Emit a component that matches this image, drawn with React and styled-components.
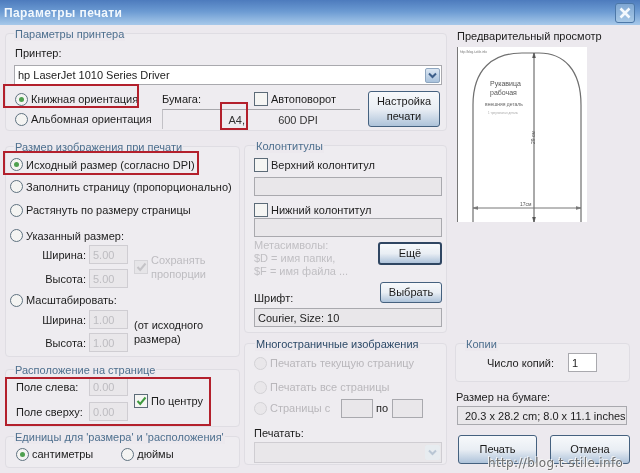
import React from "react";
import styled, { createGlobalStyle } from "styled-components";

const GlobalStyle = createGlobalStyle`
  html, body {
    margin: 0;
    padding: 0;
    background: #ece9ee;
  }
  * {
    box-sizing: border-box;
  }
`;

const Dialog = styled.div`
  position: relative;
  width: 640px;
  height: 473px;
  overflow: hidden;
  background: #ece9ee;
  color: #1c1c1c;
  font-family: "Liberation Sans", Arial, sans-serif;
  font-size: 11px;
  line-height: 14px;
  filter: blur(0.35px);
`;

const TitleBar = styled.header`
  height: 25px;
  display: flex;
  align-items: center;
  justify-content: space-between;
  padding: 0 5px 0 4px;
  background: linear-gradient(#4d7bbd, #6b9ad2 45%, #a7c9ea);
`;

const Title = styled.h1`
  margin: 0;
  color: #f2f8fd;
  font-size: 12px;
  font-weight: 700;
  letter-spacing: 0.4px;
`;

const CloseButton = styled.div`
  width: 20px;
  height: 20px;
  border: 1px solid #4d78a8;
  border-radius: 3px;
  background: linear-gradient(#7fa7d3, #a7c8e6);
  display: flex;
  align-items: center;
  justify-content: center;
`;

const Body = styled.div`
  display: flex;
  padding: 8px 8px 0 5px;
  gap: 8px;
`;

const MainColumn = styled.div`
  width: 442px;
`;

const SideColumn = styled.div`
  width: 177px;
  display: flex;
  flex-direction: column;
`;

const Columns = styled.div`
  display: flex;
  gap: 4px;
  margin-top: 15px;
`;

const Stack = styled.div`
  display: flex;
  flex-direction: column;
  width: ${(p) => p.$w}px;
`;

const Group = styled.section`
  height: ${(p) => p.$h}px;
  width: ${(p) => (p.$w ? `${p.$w}px` : "auto")};
  margin-top: ${(p) => p.$mt || 0}px;
  padding: 0 ${(p) => p.$pr || 4}px 0 ${(p) => p.$pl || 5}px;
  border: 1px solid #dfdde3;
  border-radius: 4px;
  background: #eeecf0;
`;

const Legend = styled.div`
  height: 14px;
  margin: -7px 0 0 ${(p) => p.$ml || 0}px;
  width: fit-content;
  padding: 0 1px;
  color: ${(p) => (p.$dark ? "#2d4a68" : "#4d6f8e")};
  background: #ece9ee;
  white-space: nowrap;
`;

const Row = styled.div`
  display: flex;
  align-items: center;
  height: ${(p) => p.$h}px;
  margin-top: ${(p) => p.$mt || 0}px;
  margin-left: ${(p) => p.$ml || 0}px;
  color: ${(p) => (p.$off ? "#b9b7bb" : "inherit")};
  white-space: nowrap;
`;

const Circle = styled.span`
  flex: none;
  width: 13px;
  height: 13px;
  margin-right: 3px;
  border-radius: 50%;
  border: 1px solid ${(p) => (p.$off ? "#d3d2d6" : "#5f7280")};
  background: ${(p) => (p.$off ? "#e9e7ea" : "#f4f4f2")};
  display: flex;
  align-items: center;
  justify-content: center;
  &::after {
    content: "";
    display: ${(p) => (p.$on ? "block" : "none")};
    width: 5px;
    height: 5px;
    border-radius: 50%;
    background: #4fa04f;
  }
`;

const Box = styled.span`
  flex: none;
  width: 14px;
  height: 14px;
  margin-right: 3px;
  border: 1px solid ${(p) => (p.$off ? "#d5d4d8" : "#5c6b78")};
  background: ${(p) => (p.$off ? "#e6e5e8" : "#f5f5f3")};
  display: flex;
  align-items: center;
  justify-content: center;
`;

const Field = styled.div`
  flex: none;
  width: ${(p) => (p.$w ? `${p.$w}px` : "auto")};
  height: ${(p) => p.$h || 19}px;
  margin-top: ${(p) => p.$mt || 0}px;
  margin-left: ${(p) => p.$ml || 0}px;
  padding: 0 ${(p) => p.$pad || 3}px;
  display: flex;
  align-items: center;
  border: 1px solid ${(p) => (p.$soft ? "#cfcdd2" : "#a9a9ae")};
  background: ${(p) => (p.$white ? "#fff" : "#e9e7ea")};
  color: ${(p) => (p.$faded ? "#bdbcc0" : "inherit")};
  white-space: nowrap;
`;

const DropArrow = styled.span`
  margin-left: auto;
  margin-right: -2px;
  width: 15px;
  height: 15px;
  border-radius: 2px;
  display: flex;
  align-items: center;
  justify-content: center;
  background: ${(p) => (p.$off ? "#e7ecf0" : "linear-gradient(#dce7f3, #a9c2dc)")};
  border: 1px solid ${(p) => (p.$off ? "#e7ecf0" : "#8ea6c0")};
`;

const RadioColumn = styled.div`
  flex: none;
  width: 148px;
`;

const PaperPanel = styled.div`
  flex: none;
  width: 198px;
`;

const PaperLabel = styled.span`
  width: 92px;
`;

const PaperField = styled.div`
  height: 20px;
  width: 198px;
  display: grid;
  grid-template-columns: 85px 1fr;
  align-items: center;
  border-top: 1px solid #a8a8ac;
  border-left: 1px solid #c2c1c6;
`;

const PaperRight = styled.span`
  text-align: right;
  padding-right: 3px;
  color: #333;
`;

const PaperDpi = styled.span`
  text-align: center;
  padding-right: 12px;
  color: #333;
`;

const PushButton = styled.div`
  flex: none;
  width: ${(p) => p.$w}px;
  height: ${(p) => p.$h}px;
  margin-left: ${(p) => p.$ml || 0}px;
  margin-top: ${(p) => p.$mt || 0}px;
  border: ${(p) => (p.$focus ? "2px solid #2f4662" : "1px solid #45617f")};
  border-radius: 3px;
  background: linear-gradient(#f7f9fb, #e9eef4 50%, #aec3da);
  color: #1a1a1a;
  display: flex;
  align-items: center;
  justify-content: center;
  text-align: center;
  line-height: 15px;
`;

const SizeBlock = styled.div`
  display: flex;
`;

const SizeRows = styled.div`
  width: 124px;
`;

const SizeLabel = styled.span`
  width: 79px;
  text-align: right;
  padding-right: 3px;
`;

const SizeNote = styled.div`
  display: flex;
  align-items: center;
  color: ${(p) => (p.$off ? "#bdbcc0" : "inherit")};
  line-height: 14px;
`;

const MarginLabel = styled.span`
  width: 79px;
  padding-left: 6px;
`;

const MetaBlock = styled.div`
  display: flex;
  justify-content: space-between;
  margin-top: ${(p) => p.$mt || 0}px;
  height: ${(p) => p.$h}px;
`;

const MetaText = styled.div`
  color: #c0bfc3;
  line-height: 13px;
  padding-top: 1px;
`;

const PagesLabel = styled(Row)`
  width: 87px;
`;

const PreviewTitle = styled.div`
  height: 14px;
  margin-top: -4px;
  padding-left: 2px;
  white-space: nowrap;
`;

const PreviewFrame = styled.svg`
  display: block;
  width: 130px;
  height: 175px;
  margin-top: 4px;
  margin-left: 2px;
  background: #fff;
`;

const ActionRow = styled.div`
  display: flex;
  justify-content: space-between;
  width: 172px;
  margin: 10px 0 0 3px;
`;

const Watermark = styled.div`
  position: absolute;
  left: 488px;
  top: 456px;
  font-family: "DejaVu Sans", sans-serif;
  font-size: 12px;
  line-height: 15px;
  letter-spacing: 0.35px;
  color: #6f6f6f;
  text-shadow: 1px 1px 0 #f4f4f4, -1px -1px 0 #f4f4f4;
`;

const Highlight = styled.div`
  position: absolute;
  left: ${(p) => p.$x}px;
  top: ${(p) => p.$y}px;
  width: ${(p) => p.$w}px;
  height: ${(p) => p.$h}px;
  border: 2px solid #b3202c;
  pointer-events: none;
`;

const Chevron = ({ color = "#3d5f8a" }) => (
  <svg width="9" height="7" viewBox="0 0 9 7">
    <path d="M1 1.5 L4.5 5 L8 1.5" fill="none" stroke={color} strokeWidth="2" />
  </svg>
);

const Tick = ({ color = "#3f9a3f" }) => (
  <svg width="11" height="10" viewBox="0 0 11 10">
    <path d="M1.5 5 L4.2 8 L9.5 1.5" fill="none" stroke={color} strokeWidth="2" />
  </svg>
);

const Radio = ({ on, off, h, mt, ml, children }) => (
  <Row $h={h} $mt={mt} $ml={ml} $off={off}>
    <Circle $on={on} $off={off} />
    {children}
  </Row>
);

const Preview = () => (
  <PreviewFrame viewBox="0 0 130 175">
    <path d="M0.5 0 V175" stroke="#777" strokeWidth="1" />
    <path
      d="M16 175 V58 C16 22 36 6 65 6 H82 C106 6 124 22 124 58 V175"
      fill="none"
      stroke="#6f6f6f"
      strokeWidth="1.2"
    />
    <path d="M77 6 V175" stroke="#555" strokeWidth="1" />
    <path d="M75.5 11 L77 6 L78.5 11 M75.5 170 L77 175 L78.5 170" fill="#555" stroke="#555" strokeWidth="0.6" />
    <path d="M16 161 H124" stroke="#777" strokeWidth="1" />
    <path d="M21 159.5 L16 161 L21 162.5 M119 159.5 L124 161 L119 162.5" fill="#777" stroke="#777" strokeWidth="0.6" />
    <text x="3" y="6" fontSize="3" fill="#777">http://blog.t-stile.info</text>
    <text x="33" y="39" fontSize="7" fill="#555">Рукавица</text>
    <text x="33" y="48" fontSize="7" fill="#555">рабочая</text>
    <text x="28" y="59" fontSize="5" fill="#666">внешняя деталь</text>
    <text x="31" y="67" fontSize="3" fill="#aaa">1 треугольная деталь</text>
    <text x="0" y="0" fontSize="5" fill="#555" transform="translate(78 97) rotate(-90)">29 см</text>
    <text x="63" y="159" fontSize="5" fill="#555">17см</text>
  </PreviewFrame>
);

export default function App() {
  return (
    <Dialog>
      <GlobalStyle />
      <TitleBar>
        <Title>Параметры печати</Title>
        <CloseButton>
          <svg width="12" height="12" viewBox="0 0 12 12">
            <path d="M1.5 1.5 L10.5 10.5 M10.5 1.5 L1.5 10.5" stroke="#f4f9fd" strokeWidth="2.6" />
          </svg>
        </CloseButton>
      </TitleBar>
      <Body>
        <MainColumn>
          <Group $h={98} $pr={4} $pl={8}>
            <Legend>Параметры принтера</Legend>
            <Row $h={14} $mt={5} $ml={1}>Принтер:</Row>
            <Field $white $mt={5} $h={20}>
              hp LaserJet 1010 Series Driver
              <DropArrow><Chevron /></DropArrow>
            </Field>
            <Row $h={44} $mt={2}>
              <RadioColumn>
                <Radio on h={20} ml={1}>Книжная ориентация</Radio>
                <Radio h={20} ml={1}>Альбомная ориентация</Radio>
              </RadioColumn>
              <PaperPanel>
                <Row $h={20}>
                  <PaperLabel>Бумага:</PaperLabel>
                  <Box />
                  Автоповорот
                </Row>
                <PaperField>
                  <PaperRight>A4,</PaperRight>
                  <PaperDpi>600 DPI</PaperDpi>
                </PaperField>
              </PaperPanel>
              <PushButton $w={72} $h={36} $ml={8}>
                Настройка<br />печати
              </PushButton>
            </Row>
          </Group>
          <Columns>
            <Stack $w={235}>
              <Group $h={211} $pl={4}>
                <Legend $ml={4}>Размер изображения при печати</Legend>
                <Radio on h={21}>Исходный размер (согласно DPI)</Radio>
                <Radio h={23}>Заполнить страницу (пропорционально)</Radio>
                <Radio h={24}>Растянуть по размеру страницы</Radio>
                <Radio h={17} mt={5}>Указанный размер:</Radio>
                <SizeBlock>
                  <SizeRows>
                    <Row $h={23} $mt={-1}><SizeLabel>Ширина:</SizeLabel><Field $w={39} $soft $faded>5.00</Field></Row>
                    <Row $h={23} $mt={1}><SizeLabel>Высота:</SizeLabel><Field $w={39} $soft $faded>5.00</Field></Row>
                  </SizeRows>
                  <SizeNote $off>
                    <Box $off><Tick color="#c4c3c7" /></Box>
                    <span>Сохранять<br />пропорции</span>
                  </SizeNote>
                </SizeBlock>
                <Radio h={18} mt={1}>Масштабировать:</Radio>
                <SizeBlock>
                  <SizeRows>
                    <Row $h={23} $mt={-1}><SizeLabel>Ширина:</SizeLabel><Field $w={39} $soft $faded>1.00</Field></Row>
                    <Row $h={23}><SizeLabel>Высота:</SizeLabel><Field $w={39} $soft $faded>1.00</Field></Row>
                  </SizeRows>
                  <SizeNote>
                    <span>(от исходного<br />размера)</span>
                  </SizeNote>
                </SizeBlock>
              </Group>
              <Group $h={58} $mt={12} $pl={4}>
                <Legend $ml={4}>Расположение на странице</Legend>
                <SizeBlock>
                  <SizeRows>
                    <Row $h={23} $mt={-2}><MarginLabel>Поле слева:</MarginLabel><Field $w={39} $soft $faded>0.00</Field></Row>
                    <Row $h={25} $mt={1}><MarginLabel>Поле сверху:</MarginLabel><Field $w={39} $soft $faded>0.00</Field></Row>
                  </SizeRows>
                  <SizeNote>
                    <Box><Tick /></Box>
                    По центру
                  </SizeNote>
                </SizeBlock>
              </Group>
              <Group $h={32} $mt={9} $pl={10}>
                <Legend $ml={-2}>Единицы для 'размера' и 'расположения'</Legend>
                <Row $h={22} $mt={-1}>
                  <Radio on h={22}>сантиметры</Radio>
                  <Radio h={22} ml={28}>дюймы</Radio>
                </Row>
              </Group>
            </Stack>
            <Stack $w={203}>
              <Group $h={188} $mt={-1} $pl={9}>
                <Legend $ml={1}>Колонтитулы</Legend>
                <Row $h={20} $mt={2}><Box />Верхний колонтитул</Row>
                <Field $mt={2} $h={19} />
                <Row $h={20} $mt={4}><Box />Нижний колонтитул</Row>
                <Field $h={19} $mt={-2} />
                <MetaBlock $mt={1} $h={40}>
                  <MetaText>Метасимволы:<br />$D = имя папки,<br />$F = имя файла ...</MetaText>
                  <PushButton $w={64} $h={23} $mt={4} $focus>Ещё</PushButton>
                </MetaBlock>
                <MetaBlock $mt={4} $h={26}>
                  <Row $h={20} $mt={6}>Шрифт:</Row>
                  <PushButton $w={62} $h={21}>Выбрать</PushButton>
                </MetaBlock>
                <Field $h={19}>Courier, Size: 10</Field>
              </Group>
              <Group $h={122} $mt={10} $pl={9}>
                <Legend $dark $ml={1}>Многостраничные изображения</Legend>
                <Radio off h={20} mt={2}>Печатать текущую страницу</Radio>
                <Radio off h={24} mt={2}>Печатать все страницы</Radio>
                <Row $h={20} $mt={-1}>
                  <PagesLabel $h={20} $off>
                    <Circle $off />
                    Страницы с
                  </PagesLabel>
                  <Field $w={32} $h={19} />
                  <Row $h={20} $ml={3}>по</Row>
                  <Field $w={31} $h={19} $ml={4} />
                </Row>
                <Row $h={14} $mt={8}>Печатать:</Row>
                <Field $h={21} $mt={2} $soft>
                  <DropArrow $off><Chevron color="#b9c6d4" /></DropArrow>
                </Field>
              </Group>
            </Stack>
          </Columns>
        </MainColumn>
        <SideColumn>
          <PreviewTitle>Предварительный просмотр</PreviewTitle>
          <Preview />
          <Group $h={39} $w={175} $mt={121} $pl={5}>
            <Legend $ml={4}>Копии</Legend>
            <Row $h={19} $mt={2} $ml={26}>
              Число копий:
              <Field $w={29} $white $ml={14}>1</Field>
            </Row>
          </Group>
          <Row $h={14} $mt={8} $ml={1}>Размер на бумаге:</Row>
          <Field $h={19} $w={170} $mt={2} $ml={2} $pad={7}>20.3 x 28.2 cm; 8.0 x 11.1 inches</Field>
          <ActionRow>
            <PushButton $w={79} $h={29}>Печать</PushButton>
            <PushButton $w={80} $h={29}>Отмена</PushButton>
          </ActionRow>
        </SideColumn>
      </Body>
      <Highlight $x={3} $y={84} $w={136} $h={24} />
      <Highlight $x={220} $y={102} $w={28} $h={28} />
      <Highlight $x={3} $y={151} $w={196} $h={24} />
      <Highlight $x={5} $y={377} $w={206} $h={49} />
      <Watermark>http://blog.t-stile.info</Watermark>
    </Dialog>
  );
}
